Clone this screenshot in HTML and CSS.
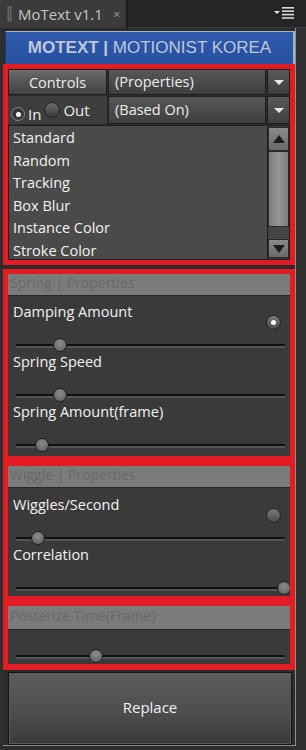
FILE: index.html
```html
<!DOCTYPE html>
<html lang="en">
<head>
  <meta charset="UTF-8">
  <meta name="viewport" content="width=device-width, initial-scale=1.0">
  <title>MoText v1.1</title>
  <link rel="stylesheet" href="styles.css">
</head>
<body>
  <div class="tabbar">
    <div class="tab">
      <span class="grip"></span>
      <span class="tab-title">MoText v1.1</span>
      <span class="tab-close">&times;</span>
    </div>
    <div class="tab-rest">
      <svg class="menu-icon" width="20" height="12" viewBox="0 0 20 12">
        <path d="M0 4h6l-3 3z" fill="#e6e6e6"/>
        <rect x="8" y="0" width="12" height="1.6" fill="#d8d8d8"/>
        <rect x="8" y="3.4" width="12" height="1.6" fill="#d8d8d8"/>
        <rect x="8" y="6.8" width="12" height="1.6" fill="#d8d8d8"/>
        <rect x="8" y="10.2" width="12" height="1.6" fill="#d8d8d8"/>
      </svg>
    </div>
  </div>

  <div class="panel">
    <div class="banner"><b>MOTEXT |</b> MOTIONIST KOREA</div>

    <!-- controls + preset list -->
    <div class="box box-controls">
      <div class="row">
        <button class="btn-controls">Controls</button>
        <div class="select">(Properties)</div>
        <div class="select-arrow"></div>
      </div>
      <div class="row row-2">
        <div class="radios">
          <span class="radio radio-in on"></span><span class="radio-label label-in">In</span>
          <span class="radio radio-out"></span><span class="radio-label">Out</span>
        </div>
        <div class="select">(Based On)</div>
        <div class="select-arrow"></div>
      </div>
      <div class="list">
        <ul class="items">
          <li>Standard</li>
          <li>Random</li>
          <li>Tracking</li>
          <li>Box Blur</li>
          <li>Instance Color</li>
          <li>Stroke Color</li>
        </ul>
        <div class="scrollbar">
          <div class="sb-btn sb-up"></div>
          <div class="sb-thumb"></div>
          <div class="sb-track"></div>
          <div class="sb-btn sb-down"></div>
        </div>
      </div>
    </div>

    <!-- spring -->
    <div class="box box-spring">
      <div class="section-head">Spring | Properties</div>
      <div class="fields">
        <div class="field">
          <div class="field-head">
            <span class="field-label">Damping Amount</span>
            <span class="toggle on"></span>
          </div>
          <div class="slider"><span class="thumb" style="left: 37px"></span></div>
        </div>
        <div class="field">
          <div class="field-head">
            <span class="field-label">Spring Speed</span>
          </div>
          <div class="slider"><span class="thumb" style="left: 37px"></span></div>
        </div>
        <div class="field">
          <div class="field-head">
            <span class="field-label">Spring Amount(frame)</span>
          </div>
          <div class="slider"><span class="thumb" style="left: 19px"></span></div>
        </div>
      </div>
    </div>

    <!-- wiggle -->
    <div class="box box-wiggle">
      <div class="section-head">Wiggle | Properties</div>
      <div class="fields">
        <div class="field">
          <div class="field-head">
            <span class="field-label">Wiggles/Second</span>
            <span class="toggle"></span>
          </div>
          <div class="slider"><span class="thumb" style="left: 15px"></span></div>
        </div>
        <div class="field">
          <div class="field-head">
            <span class="field-label">Correlation</span>
          </div>
          <div class="slider"><span class="thumb" style="left: 261px"></span></div>
        </div>
      </div>
    </div>

    <!-- posterize -->
    <div class="box box-posterize">
      <div class="section-head head-tall">Posterize Time(Frame)</div>
      <div class="slider slider-solo"><span class="thumb" style="left: 73px"></span></div>
    </div>

    <button class="replace">Replace</button>
  </div>
</body>
</html>
```

FILE: styles.css
```css
/* base */
body {
  margin: 0;
  width: 306px;
  height: 750px;
  overflow: hidden;
  background: #2f2f2f;
  font-family: 'Open Sans', 'Noto Sans', sans-serif;
  font-size: 14px;
  color: #f2f2f2;
}

/* tab bar */
.tabbar {
  display: flex;
  height: 28px;
}

.tab {
  width: 126px;
  display: flex;
  align-items: center;
  background: #3b3b3b;
  border-right: 2px solid #1c1c1c;
}

.grip {
  width: 5px;
  height: 16px;
  margin: 0 6px 0 7px;
  background-image: radial-gradient(circle, #777 0.8px, transparent 1px);
  background-size: 2.5px 2.5px;
}

.tab-title {
  font-size: 15px;
  color: #c4c4c4;
}

.tab-close {
  margin-left: 10px;
  font-size: 13px;
  color: #9a9a9a;
}

.tab-rest {
  flex: 1;
  display: flex;
  justify-content: flex-end;
  align-items: flex-start;
  background: #252525;
  border-bottom: 1px solid #3c3c3c;
}

.menu-icon {
  margin: 7px 12px 0 0;
}

/* panel */
.panel {
  width: 292px;
  margin-left: 3px;
  padding-top: 3px;
  background: #2c2c2c;
  border-right: 1px solid #8e8e8e;
  border-bottom: 1px solid #8e8e8e;
}

.banner {
  height: 32px;
  margin-left: 2px;
  background: linear-gradient(#2f59ab, #2750a0);
  border-top: 1px solid #a9b3c6;
  border-right: 2px solid #a9b3c6;
  border-left: 1px solid #1e3a78;
  text-align: center;
  line-height: 32px;
  font-family: 'Liberation Sans', sans-serif;
  font-size: 17px;
  color: #bfc7da;
}

/* red frames */
.box {
  border: 5px solid #e31b23;
  background: #3a3a3a;
}

.box-controls {
  background: #2c2c2c;
}

.box-spring {
  margin-top: 4px;
}

/* controls rows */
.row {
  display: flex;
  gap: 1px;
  height: 26px;
}

.row-2 {
  height: 28px;
  margin-top: 1px;
}

.btn-controls {
  width: 99px;
  margin: 0;
  padding: 0;
  border: 1px solid #1e1e1e;
  background: linear-gradient(#6c6c6c, #545454 50%, #444 100%);
  font-family: inherit;
  font-size: 14.5px;
  color: #ececec;
}

.select {
  flex: 1;
  border: 1px solid #1e1e1e;
  background: linear-gradient(#575757, #3f3f3f);
  padding-left: 6px;
  line-height: 24px;
  font-size: 14.5px;
  color: #ededed;
}

.row-2 .select {
  line-height: 26px;
}

.select-arrow {
  width: 21px;
  border: 1px solid #1e1e1e;
  background: linear-gradient(#585858, #3f3f3f);
  display: flex;
  align-items: center;
  justify-content: center;
}

.select-arrow::after {
  content: "";
  border-left: 5px solid transparent;
  border-right: 5px solid transparent;
  border-top: 5px solid #e8e8e8;
}

.radios {
  width: 99px;
  display: flex;
  align-items: center;
  background: #3d3d3d;
}

.radio {
  border-radius: 50%;
  box-sizing: border-box;
}

.radio-in {
  width: 14px;
  height: 14px;
  margin: 8px 3px 0 3px;
  background: #363636;
  border: 1px solid #8a8a8a;
  display: flex;
  align-items: center;
  justify-content: center;
}

.radio-in.on::after {
  content: "";
  width: 5px;
  height: 5px;
  border-radius: 50%;
  background: #fff;
}

.radio-out {
  width: 16px;
  height: 16px;
  margin: 0 3px 0 3px;
  background: linear-gradient(#6c6c6c, #3a3a3a);
  border: 1px solid #222;
}

.radio-label {
  font-size: 15px;
  color: #efefef;
}

.label-in {
  margin-top: 8px;
}

/* preset list */
.list {
  display: flex;
  height: 135px;
  margin-top: 1px;
  border: 1px solid #1e1e1e;
  box-sizing: border-box;
}

.items {
  flex: 1;
  margin: 0;
  padding: 1px 0 0 4px;
  list-style: none;
  background: #4a4a4a;
}

.items li {
  line-height: 22.6px;
  font-size: 14.5px;
}

.scrollbar {
  width: 21px;
  display: flex;
  flex-direction: column;
  background: #3a3a3a;
  border-left: 1px solid #1e1e1e;
  padding: 1px 0;
}

.sb-btn {
  height: 22px;
  background: linear-gradient(#8a8a8a, #6a6a6a);
  border: 1px solid #2a2a2a;
  display: flex;
  align-items: center;
  justify-content: center;
}

.sb-down {
  height: 17px;
}

.sb-up::after {
  content: "";
  border-left: 6px solid transparent;
  border-right: 6px solid transparent;
  border-bottom: 8px solid #1c1c1c;
}

.sb-down::after {
  content: "";
  border-left: 6px solid transparent;
  border-right: 6px solid transparent;
  border-top: 8px solid #1c1c1c;
}

.sb-thumb {
  flex: 1;
  background: linear-gradient(90deg, #7c7c7c, #959595 50%, #7c7c7c);
  border: 1px solid #2a2a2a;
}

.sb-track {
  height: 12px;
  background: #454545;
}

/* property sections */
.section-head {
  height: 21px;
  line-height: 17px;
  padding-left: 2px;
  background: #7b7b7b;
  color: #696969;
  border-bottom: 1px solid #262626;
}

.head-tall {
  height: 23px;
  line-height: 19px;
}

.fields {
  padding: 6px 0 4px;
}

.box-wiggle .fields {
  padding: 7px 0 1px;
}

.field {
  height: 50px;
}

.field-head {
  display: flex;
  justify-content: space-between;
  height: 36px;
  padding-left: 5px;
}

.field-label {
  line-height: 20px;
  font-size: 14.5px;
}

.toggle {
  width: 15px;
  height: 15px;
  margin: 13px 9px 0 0;
  box-sizing: border-box;
  border-radius: 50%;
  border: 1px solid #222;
  background: linear-gradient(#7a7a7a, #4a4a4a);
  display: flex;
  align-items: center;
  justify-content: center;
}

.toggle.on::after {
  content: "";
  width: 5px;
  height: 5px;
  border-radius: 50%;
  background: #fff;
}

/* sliders */
.slider {
  position: relative;
  height: 14px;
  margin: 0 5px 0 8px;
}

.slider::before {
  content: "";
  position: absolute;
  left: 0;
  right: 0;
  top: 6px;
  height: 2px;
  background: #111;
  box-shadow: 0 2px 0 #555;
}

.thumb {
  position: absolute;
  top: 0;
  width: 14px;
  height: 14px;
  box-sizing: border-box;
  border-radius: 50%;
  border: 1px solid #1e1e1e;
  background: radial-gradient(circle at 50% 35%, #8c8c8c, #5a5a5a);
}

.box-wiggle .field:last-child .slider {
  margin-right: 0;
  overflow: hidden;
}

.slider-solo {
  margin-top: 19px;
  margin-bottom: 1px;
}

.box-posterize {
  border-bottom-width: 6px;
}

/* replace button */
.replace {
  display: block;
  width: 284px;
  height: 73px;
  margin: 2px 3px 0 5px;
  padding: 0 0 4px;
  border: 1px solid #141414;
  box-shadow: inset 0 0 0 1px #5a5a5a;
  background: linear-gradient(#5d5d5d, #4d4d4d 55%, #3a3a3a);
  font-family: inherit;
  font-size: 15px;
  color: #f2f2f2;
}
```
